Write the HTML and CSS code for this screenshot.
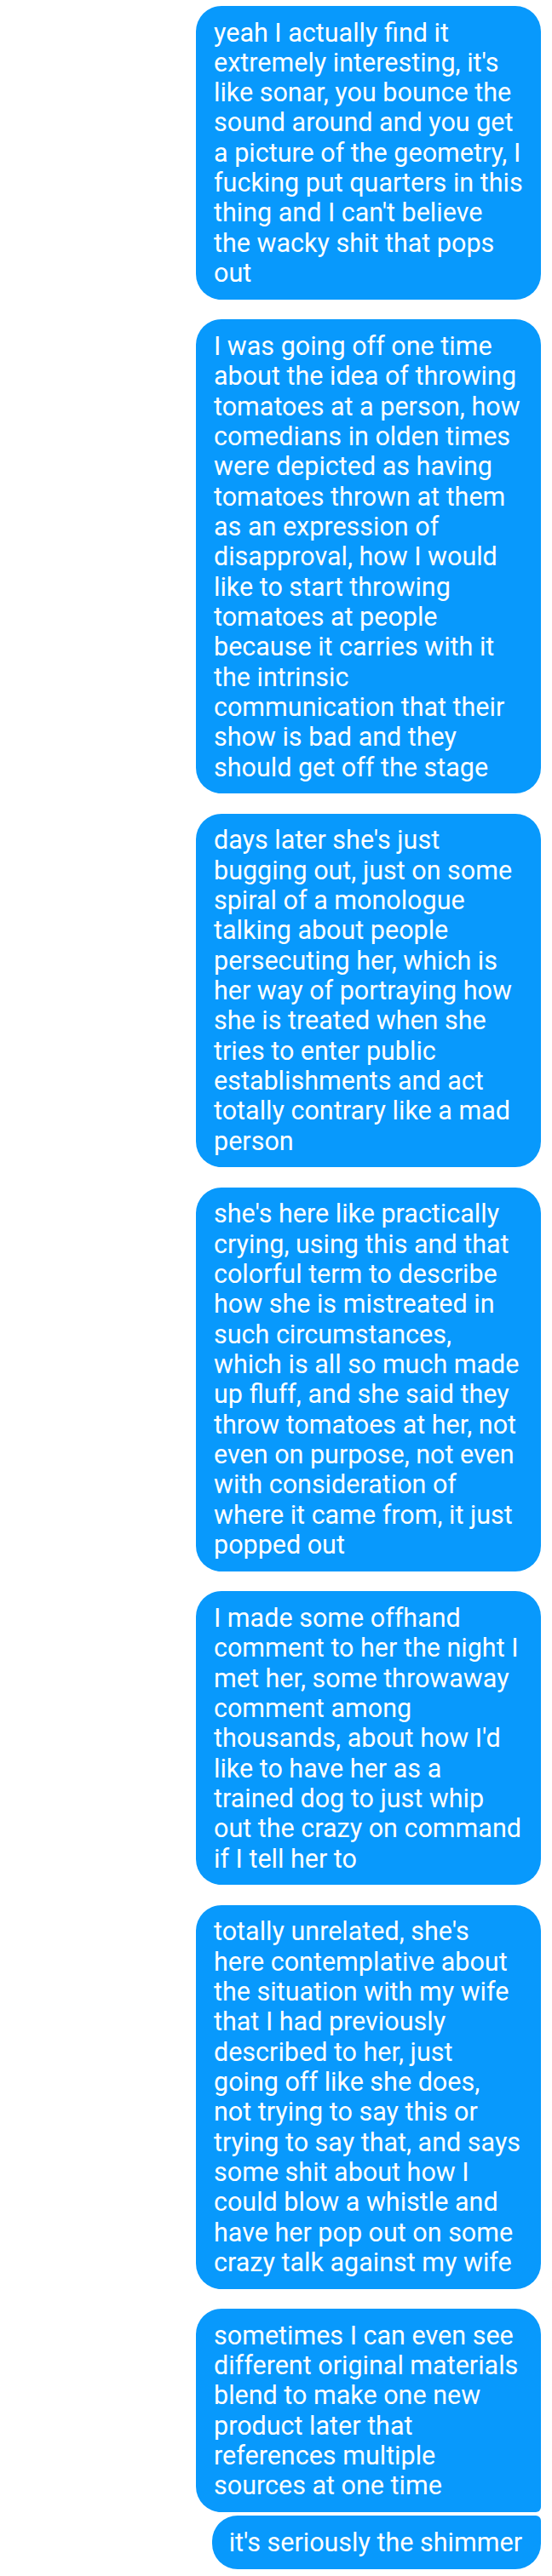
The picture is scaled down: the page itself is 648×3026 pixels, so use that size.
FILE: index.html
```html
<!DOCTYPE html>
<html lang="en">
<head>
<meta charset="utf-8">
<title>Messages</title>
<link rel="stylesheet" href="styles.css">
</head>
<body>
<main class="thread">
  <div class="msg">yeah I actually find it<br>extremely interesting, it's<br>like sonar, you bounce the<br>sound around and you get<br>a picture of the geometry, I<br>fucking put quarters in this<br>thing and I can't believe<br>the wacky shit that pops<br>out</div>
  <div class="msg">I was going off one time<br>about the idea of throwing<br>tomatoes at a person, how<br>comedians in olden times<br>were depicted as having<br>tomatoes thrown at them<br>as an expression of<br>disapproval, how I would<br>like to start throwing<br>tomatoes at people<br>because it carries with it<br>the intrinsic<br>communication that their<br>show is bad and they<br>should get off the stage</div>
  <div class="msg">days later she's just<br>bugging out, just on some<br>spiral of a monologue<br>talking about people<br>persecuting her, which is<br>her way of portraying how<br>she is treated when she<br>tries to enter public<br>establishments and act<br>totally contrary like a mad<br>person</div>
  <div class="msg">she's here like practically<br>crying, using this and that<br>colorful term to describe<br>how she is mistreated in<br>such circumstances,<br>which is all so much made<br>up fluff, and she said they<br>throw tomatoes at her, not<br>even on purpose, not even<br>with consideration of<br>where it came from, it just<br>popped out</div>
  <div class="msg">I made some offhand<br>comment to her the night I<br>met her, some throwaway<br>comment among<br>thousands, about how I'd<br>like to have her as a<br>trained dog to just whip<br>out the crazy on command<br>if I tell her to</div>
  <div class="msg">totally unrelated, she's<br>here contemplative about<br>the situation with my wife<br>that I had previously<br>described to her, just<br>going off like she does,<br>not trying to say this or<br>trying to say that, and says<br>some shit about how I<br>could blow a whistle and<br>have her pop out on some<br>crazy talk against my wife</div>
  <div class="msg group-first">sometimes I can even see<br>different original materials<br>blend to make one new<br>product later that<br>references multiple<br>sources at one time</div>
  <div class="msg group-last short">it's seriously the shimmer</div>
</main>
</body>
</html>
```
FILE: styles.css
```css
html, body {
  margin: 0;
  padding: 0;
  background: #ffffff;
}

body {
  font-family: Roboto, "Liberation Sans", Arial, sans-serif;
}

.thread {
  display: flex;
  flex-direction: column;
  align-items: stretch;
  width: 405px;
  margin-left: auto;
  margin-right: 13px;
  padding-top: 7px;
}

.msg {
  box-sizing: border-box;
  background: #0899fc;
  color: #ffffff;
  font-size: 30.5px;
  line-height: 35.33px;
  padding: 13.5px 20px 13.5px 21px;
  border-radius: 30px;
  white-space: nowrap;
  margin-bottom: 23.5px;
}

.msg.group-first {
  border-bottom-right-radius: 6px;
  margin-bottom: 4px;
}

.msg.group-last {
  border-top-right-radius: 6px;
}

.msg.short {
  align-self: flex-end;
  padding-left: 20px;
  padding-right: 22px;
}
```
